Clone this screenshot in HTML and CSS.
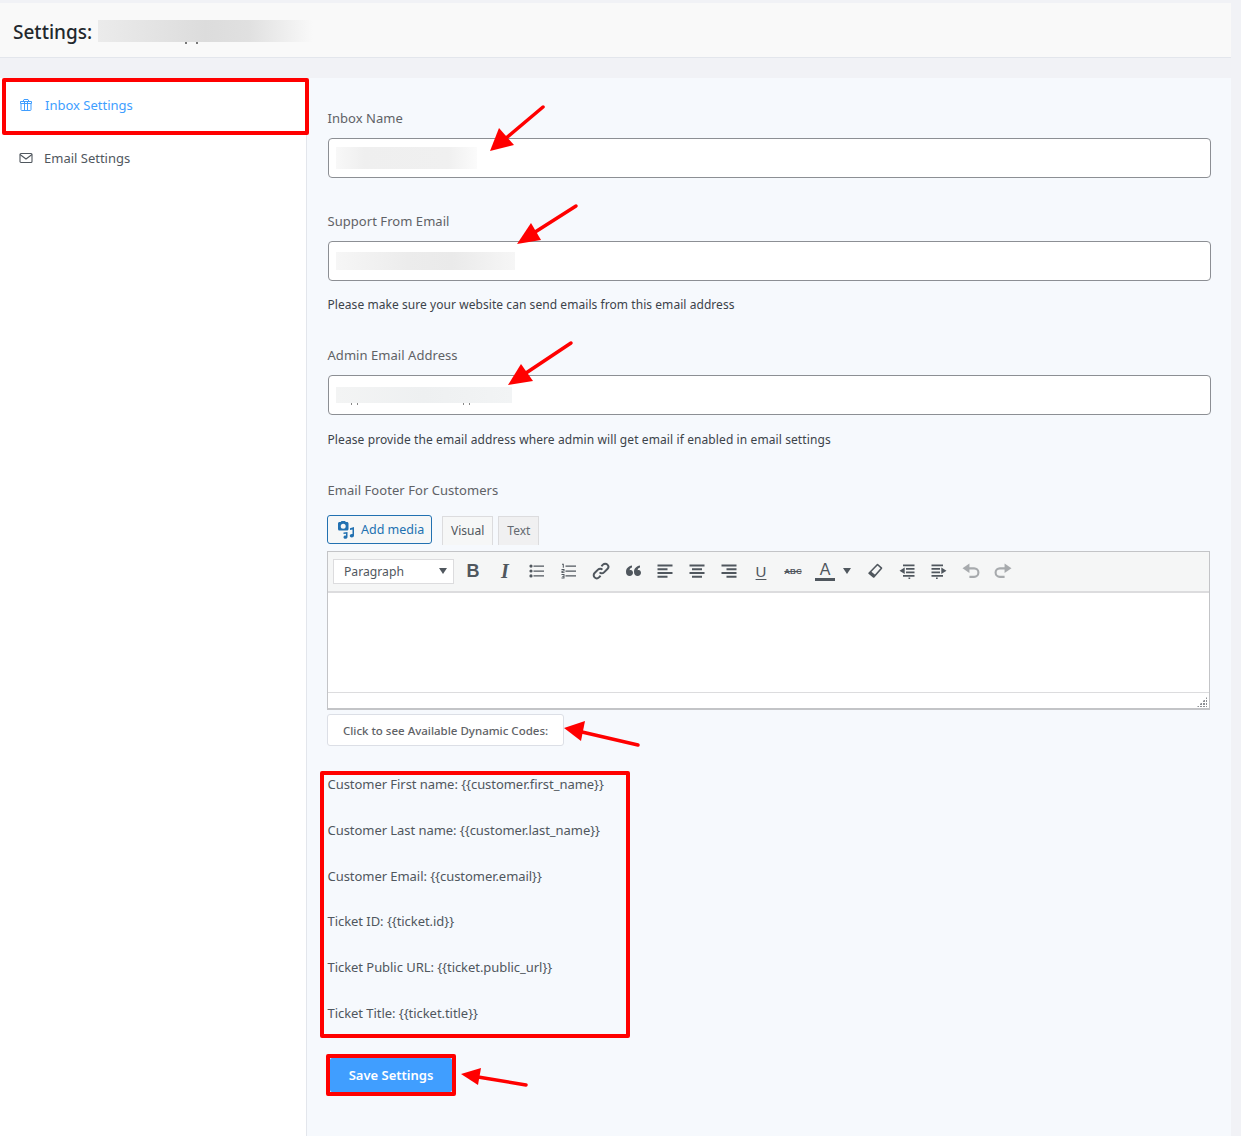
FILE: index.html
```html
<!DOCTYPE html>
<html lang="en">
<head>
<meta charset="utf-8">
<title>Settings</title>
<link rel="stylesheet" href="styles.css">
</head>
<body>
<div class="page">
  <header class="topbar">
    <h1 class="title">Settings:</h1>
    <span class="smear smear-title"></span>
  </header>
  <div class="main">
    <nav class="sidebar">
      <a class="nav-item active">
        <svg class="nav-icon" viewBox="0 0 14 14" fill="none" stroke="currentColor" stroke-width="1"><path d="M2 5.500v6.200c0 .5.300.8.8.8h8.400c.5 0 .8-.3.8-.8V5.500M1.500 3.500h11v2h-11zM5 1.500h4l1 2H4zM5.500 3.500v9M8.500 3.500v9"/></svg>
        <span>Inbox Settings</span>
      </a>
      <a class="nav-item">
        <svg class="nav-icon" viewBox="0 0 14 14" fill="none" stroke="currentColor" stroke-width="1.100"><rect x="1" y="2.500" width="12" height="9" rx="1"/><path d="M1 3.500 7 8l6-4.500"/></svg>
        <span>Email Settings</span>
      </a>
    </nav>
    <main class="content">
      <section class="field">
        <label class="label">Inbox Name</label>
        <div class="input"><span class="smear smear-a"></span></div>
      </section>
      <section class="field">
        <label class="label">Support From Email</label>
        <div class="input"><span class="smear smear-b"></span></div>
        <p class="help">Please make sure your website can send emails from this email address</p>
      </section>
      <section class="field">
        <label class="label">Admin Email Address</label>
        <div class="input"><span class="smear smear-c"></span></div>
        <p class="help help-low">Please provide the email address where admin will get email if enabled in email settings</p>
      </section>
      <section class="field field-editor">
        <label class="label">Email Footer For Customers</label>
        <div class="editor-tabs">
          <button class="media-btn">
            <svg class="media-icon" viewBox="0 0 18 18"><path fill="#2271b1" d="M1 2.500C1 1.700 1.700 1 2.500 1h1.200l.8-1h3.500l.8 1h1.200c.8 0 1.500.7 1.500 1.500V8c0 .8-.7 1.500-1.500 1.500h-8C1.700 9.500 1 8.800 1 8zM6.200 2.700a2.500 2.500 0 1 0 0 5 2.500 2.500 0 0 0 0-5z"/><path fill="#2271b1" d="M17 6v8.500c0 1.200-1 2-2.200 2s-2-.7-2-1.700.9-1.800 2-1.800c.3 0 .5 0 .7.100V8.500l-2.500.6V7.200zM6.500 11.500l4-.5v5c0 1-.9 1.800-2 1.800s-2-.7-2-1.600.8-1.600 2-1.600c.2 0 .4 0 .5.100v-2l-2.500.4z"/></svg>
            <span>Add media</span>
          </button>
          <span class="tab tab-on">Visual</span>
          <span class="tab">Text</span>
        </div>
        <div class="editor">
          <div class="toolbar">
            <div class="format-select"><span>Paragraph</span><i class="caret"></i></div>
            <div class="tools">
              <span class="tool glyph glyph-b">B</span>
              <span class="tool glyph glyph-i">I</span>
              <span class="tool"><svg class="ico" viewBox="0 0 16 16"><path d="M4.500 2.500h10.500v1.300H4.500zM4.500 7.400h10.500v1.300H4.500zM4.500 12.300h10.500v1.300H4.500z"/><circle cx="2" cy="3.100" r="1.600"/><circle cx="2" cy="8" r="1.600"/><circle cx="2" cy="12.900" r="1.600"/></svg></span>
              <span class="tool"><svg class="ico" viewBox="0 0 16 16"><path d="M4.500 2.500h10.500v1.300H4.500zM4.500 7.400h10.500v1.300H4.500zM4.500 12.300h10.500v1.300H4.500zM1 .8h1.800v4H1.800V1.800H1zM.5 6h3v2.400H1.700v.8h1.800v.9H.5V7.700h2V7h-2zM.5 11h3v4.500h-3v-.9h2v-.9H1.200V13h1.300v-1.100h-2z"/></svg></span>
              <span class="tool"><svg class="ico-lg" viewBox="0 0 18 18" fill="none" stroke="#50575e" stroke-width="2"><path d="M7.600 10.400a3.100 3.100 0 0 0 4.400 0l3.400-3.400a3.100 3.100 0 0 0-4.400-4.400L9.400 4.200"/><path d="M10.400 7.600a3.100 3.100 0 0 0-4.400 0l-3.400 3.400a3.100 3.100 0 0 0 4.400 4.400l1.600-1.600"/></svg></span>
              <span class="tool"><svg class="ico" viewBox="0 0 16 16"><path d="M7 2.500v2C5.300 5 4.700 6 4.700 7.200c.3-.2.700-.2 1-.2C6.900 7 8 8.100 8 9.800c0 1.800-1.400 3.200-3.300 3.200C2.500 13 1 11.300 1 8.900 1 5.500 3.300 3.100 7 2.500zM15 2.500v2c-1.700.5-2.300 1.500-2.300 2.700.3-.2.7-.2 1-.2 1.200 0 2.300 1.100 2.300 2.800 0 1.800-1.400 3.200-3.300 3.200-2.200 0-3.700-1.700-3.700-4.100 0-3.400 2.300-5.800 6-6.400z"/></svg></span>
              <span class="tool"><svg class="ico" viewBox="0 0 16 16"><path d="M.5 1.500h15v2H.5zM.5 5.300h10v2H.5zM.5 9h15v2H.5zM.5 12.700h10v2H.5z"/></svg></span>
              <span class="tool"><svg class="ico" viewBox="0 0 16 16"><path d="M.5 1.500h15v2H.5zM3 5.300h10v2H3zM.5 9h15v2H.5zM3 12.700h10v2H3z"/></svg></span>
              <span class="tool"><svg class="ico" viewBox="0 0 16 16"><path d="M.5 1.500h15v2H.5zM5.500 5.300h10v2h-10zM.5 9h15v2H.5zM5.500 12.700h10v2h-10z"/></svg></span>
              <span class="tool glyph glyph-u">U</span>
              <span class="tool glyph glyph-abc">ABC</span>
              <span class="tool"><span class="glyph-a">A</span></span>
              <i class="caret caret-color"></i>
              <span class="tool tool-after"><svg class="ico" viewBox="0 0 16 16"><path fill="none" stroke="#50575e" stroke-width="1.600" stroke-linejoin="round" d="M10.500 1.500 14.500 5.200 6.800 14 2 10.200z"/><path d="M2 10.200 6.800 14l1.700-2-4.800-3.800z"/></svg></span>
              <span class="tool"><svg class="ico" viewBox="0 0 16 16"><path d="M4 1.500h11.500v1.700H4zM7 5h8.500v1.800H7zM7 8.500h8.500v1.800H7zM4 12h11.500v1.700H4zM9.500 14.500h1.700V16H9.500zM5.700 4.500v6.500L.5 7.750z"/></svg></span>
              <span class="tool"><svg class="ico" viewBox="0 0 16 16"><path d="M.5 1.500H12v1.700H.5zM.5 5H9v1.800H.5zM.5 8.500H9v1.800H.5zM.5 12H12v1.700H.5zM5 14.500h1.700V16H5zM10.300 4.500v6.500l5.200-3.250z"/></svg></span>
              <span class="tool"><svg class="ico-dim" viewBox="0 0 17 17" fill="none" stroke="#a7aaad" stroke-width="2"><path d="M5 6h6.500a4 4 0 0 1 0 8H7"/><path fill="#a7aaad" stroke="none" d="M7 1.500v9L.5 6z"/></svg></span>
              <span class="tool"><svg class="ico-dim" viewBox="0 0 17 17" fill="none" stroke="#a7aaad" stroke-width="2"><path d="M12 6H5.500a4 4 0 0 0 0 8H10"/><path fill="#a7aaad" stroke="none" d="M10 1.500v9L16.500 6z"/></svg></span>
            </div>
          </div>
          <div class="editor-body"></div>
          <div class="editor-status"><i class="grip"></i></div>
        </div>
        <button class="codes-btn">Click to see Available Dynamic Codes:</button>
      </section>
      <ul class="codes">
        <li>Customer First name: {{customer.first_name}}</li>
        <li>Customer Last name: {{customer.last_name}}</li>
        <li>Customer Email: {{customer.email}}</li>
        <li>Ticket ID: {{ticket.id}}</li>
        <li>Ticket Public URL: {{ticket.public_url}}</li>
        <li>Ticket Title: {{ticket.title}}</li>
      </ul>
      <button class="save-btn">Save Settings</button>
    </main>
  </div>
</div>
<div class="mark mark-nav"></div>
<div class="mark mark-codes"></div>
<div class="mark mark-save"></div>
<svg class="arrows" width="1241" height="1136" viewBox="0 0 1241 1136">
  <g stroke="#f00" stroke-width="3.500" stroke-linecap="round" fill="#f00">
    <path d="M543 107 505 139"/><path stroke="none" d="M490 151 499 128 514 145z"/>
    <path d="M576 206 532 234"/><path stroke="none" d="M517 244 531 223 541 240z"/>
    <path d="M571 343 523 375"/><path stroke="none" d="M508 385 521 364 533 381z"/>
    <path d="M638 745 582 732"/><path stroke="none" d="M564 728 585 721 581 741z"/>
    <path d="M526 1085 478 1077"/><path stroke="none" d="M461 1074 481 1068 478 1085z"/>
  </g>
</svg>
</body>
</html>
```
FILE: styles.css
```css
* { box-sizing: border-box; }
html, body { margin: 0; padding: 0; }
body {
  background: #f1f2f6;
  font-family: "Noto Sans", "Open Sans", sans-serif;
  font-size: 13px;
  color: #50575e;
  height: 1136px;
  overflow: hidden;
  position: relative;
}
.page { padding: 3px 10px 0 0; }
.topbar {
  height: 55px;
  background: #f9f9f9;
  border-bottom: 1px solid #e3e6ec;
  display: flex;
  align-items: center;
  padding: 2px 0 0 13px;
  gap: 6px;
}
.title { margin: 2px 0 0; font-size: 19px; font-weight: 500; color: #23282d; line-height: 1; }
.smear { display: block; position: relative; }
.smear-title {
  width: 215px;
  height: 22px;
  background: linear-gradient(90deg, #ebebeb, #e2e2e2 30%, #dcdcdc 50%, #e0e0e0 70%, #f9f9f9 100%);
}
.smear-title::after {
  content: "";
  position: absolute;
  left: 87px;
  bottom: -2px;
  width: 2px;
  height: 2px;
  background: #777;
  box-shadow: 11px 0 #777;
}
.main { display: flex; margin-top: 20px; height: 1058px; }
.sidebar {
  width: 307px;
  flex: none;
  background: #fff;
  border-right: 1px solid #e3e6ec;
}
.nav-item {
  display: flex;
  align-items: center;
  gap: 11px;
  height: 53px;
  padding: 0 0 1px 19px;
  font-size: 13px;
  color: #50575e;
}
.nav-item.active { color: #409eff; height: 54px; gap: 12px; }
.nav-icon { width: 14px; height: 14px; flex: none; }
.content {
  flex: 1;
  background: #f6f9fd;
  padding: 30px 20px 0 20px;
}
.field { margin-bottom: 33px; }
.label {
  display: block;
  font-size: 13px;
  letter-spacing: 0.05px;
  line-height: 20px;
  color: #606266;
  margin: 0 0 10px 0;
  padding-left: 0.500px;
}
.input {
  height: 40px;
  margin-left: 1px;
  background: #fff;
  border: 1px solid #8c8f94;
  border-radius: 4px;
  display: flex;
  align-items: center;
  padding-left: 7px;
}
.smear-a { width: 141px; height: 22px; background: linear-gradient(90deg, #f8f8f8, #efefef 20%, #f0f0f0 80%, #fbfbfb); }
.smear-b { width: 179px; height: 18px; background: linear-gradient(90deg, #f6f6f6, #ececec 40%, #eaeaea 65%, #f6f6f6); }
.smear-c { width: 176px; height: 16px; background: linear-gradient(90deg, #f3f4f4, #eef0f1 50%, #f2f4f5); }
.smear-c::after {
  content: "";
  position: absolute;
  left: 15px;
  bottom: -2px;
  width: 1px;
  height: 2px;
  background: #888;
  box-shadow: 6px 0 #888, 112px 0 #888, 118px 0 #888;
}
.help { margin: 15px 0 -2px; padding-left: 0.500px; font-size: 12px; letter-spacing: 0.06px; line-height: 18px; color: #3c434a; }
.help-low { margin: 16px 0 -2px; letter-spacing: 0.1px; }
.field-editor { margin-bottom: 28px; }
.editor-tabs { display: flex; align-items: flex-end; height: 30px; margin: 15px 0 6px; }
.media-btn {
  display: flex;
  align-items: center;
  gap: 6px;
  height: 29px;
  align-self: flex-start;
  width: 105px;
  padding: 0 0 0 9px;
  background: #f6f7f7;
  border: 1px solid #2271b1;
  border-radius: 3px;
  color: #2271b1;
  font: 12.500px "Noto Sans", sans-serif;
  margin-right: 10px;
}
.media-icon { width: 18px; height: 18px; }
.tab {
  height: 29px;
  padding: 0 8px;
  line-height: 28px;
  font-size: 12px;
  border: 1px solid #dcdcde;
  border-bottom: 0;
  margin-right: 5px;
  background: #f0f0f1;
  color: #646970;
}
.tab-on { background: #f6f7f7; color: #50575e; }
.editor {
  margin-right: 1px;
  border: 1px solid #c3c4c7;
  border-bottom-width: 2px;
  background: #fff;
}
.toolbar {
  height: 41px;
  background: #f5f6f6;
  border-bottom: 2px solid #dcdcde;
  display: flex;
  align-items: center;
  padding: 0 0 1px 5px;
}
.format-select {
  width: 121px;
  height: 25px;
  background: #fff;
  border: 1px solid #dcdcde;
  display: flex;
  align-items: center;
  justify-content: space-between;
  padding: 0 6px 0 10px;
  font-size: 12.200px;
  color: #50575e;
  margin-right: 3px;
}
.caret {
  display: block;
  width: 0;
  height: 0;
  border-left: 4px solid transparent;
  border-right: 4px solid transparent;
  border-top: 6px solid #50575e;
}
.tools { display: flex; align-items: center; }
.tool {
  width: 32px;
  height: 28px;
  display: flex;
  align-items: center;
  justify-content: center;
  color: #50575e;
}
.ico { width: 16px; height: 16px; fill: #50575e; }
.ico-lg { width: 18px; height: 18px; }
.ico-dim { width: 18px; height: 18px; }
.glyph { font-family: "Liberation Sans", sans-serif; }
.glyph-b { font-weight: 700; font-size: 18px; }
.glyph-i { font-family: "Liberation Serif", serif; font-style: italic; font-weight: 700; font-size: 20px; }
.glyph-u { font-size: 15px; text-decoration: underline; text-underline-offset: 2px; }
.glyph-abc { font-size: 8px; text-decoration: line-through; font-weight: 700; }
.glyph-a {
  display: block;
  width: 20px;
  font: 16px/17px "Liberation Sans", sans-serif;
  text-align: center;
  border-bottom: 3px solid #50575e;
}
.caret-color { margin-left: 2px; }
.tool-after { margin-left: 8px; }
.editor-body { height: 99px; background: #fff; }
.editor-status {
  height: 16px;
  border-top: 1px solid #dcdcde;
  display: flex;
  justify-content: flex-end;
  align-items: flex-end;
  padding: 0 2px 1px 0;
}
.grip {
  display: block;
  width: 10px;
  height: 10px;
  background:
    radial-gradient(circle at 1px 1px, #8c8f94 1px, transparent 1px) 0 0 / 3px 3px;
  clip-path: polygon(100% 0, 100% 100%, 0 100%);
}
.codes-btn {
  display: block;
  margin-top: 4px;
  width: 237px;
  height: 32px;
  padding: 0;
  background: #fff;
  border: 1px solid #dcdfe6;
  border-radius: 3px;
  color: #606266;
  font: 500 11.500px "Noto Sans", sans-serif;
}
.codes { list-style: none; margin: 0; padding: 0 0 0 0.500px; }
.codes li { height: 45.800px; line-height: 20px; font-size: 13px; letter-spacing: -0.05px; color: #50575e; }
.save-btn {
  display: block;
  margin: 9px 0 0 3px;
  width: 122px;
  height: 34px;
  background: #409eff;
  border: 0;
  border-radius: 2px;
  color: #fff;
  font: 600 13px "Noto Sans", sans-serif;
}
.mark { position: absolute; border: 4px solid #f00; border-radius: 2px; pointer-events: none; }
.mark-nav { left: 2px; top: 78px; width: 307px; height: 57px; }
.mark-codes { left: 320px; top: 771px; width: 310px; height: 267px; }
.mark-save { left: 326px; top: 1054px; width: 130px; height: 42px; }
.arrows { position: absolute; left: 0; top: 0; pointer-events: none; }
```
